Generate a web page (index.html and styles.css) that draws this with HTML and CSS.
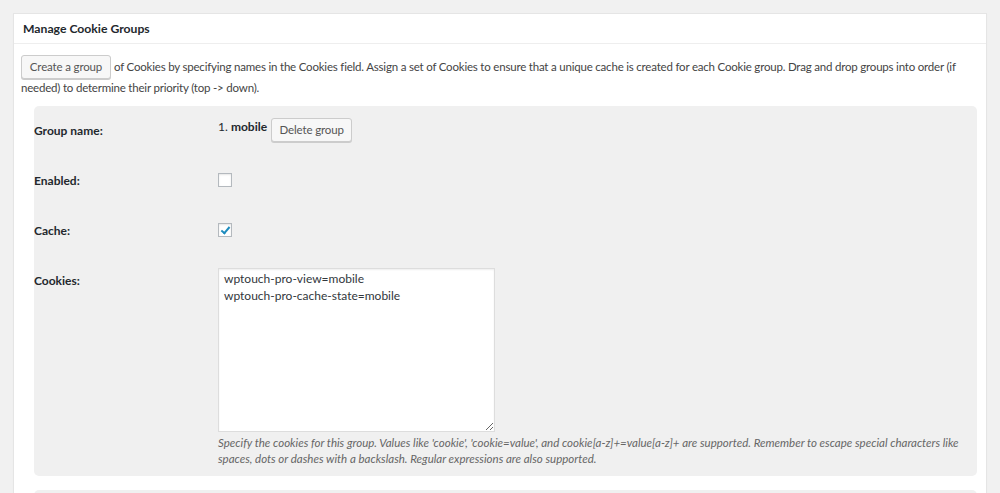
FILE: index.html
```html
<!DOCTYPE html>
<html lang="en">
<head>
<meta charset="utf-8">
<title>Manage Cookie Groups</title>
<link rel="stylesheet" href="styles.css">
</head>
<body>
<div class="postbox">
  <h2 class="hndle">Manage Cookie Groups</h2>
  <div class="inside">
    <div class="intro">
      <button class="button btn-create" type="button">Create a group</button>
      <p class="intro-text">of Cookies by specifying names in the Cookies field. Assign a set of Cookies to ensure that a unique cache is created for each Cookie group. Drag and drop groups into order (if needed) to determine their priority (top -&gt; down).</p>
    </div>
    <div class="groups">
      <div class="group">
        <div class="row row-name">
          <div class="label">Group name:</div>
          <div class="value"><span class="gname">1. <strong>mobile</strong></span> <button class="button btn-delete" type="button">Delete group</button></div>
        </div>
        <div class="row row-check">
          <div class="label">Enabled:</div>
          <div class="value"><input class="cb" type="checkbox"></div>
        </div>
        <div class="row row-check">
          <div class="label">Cache:</div>
          <div class="value"><input class="cb" type="checkbox" checked></div>
        </div>
        <div class="row row-cookies">
          <div class="label">Cookies:</div>
          <div class="value">
            <textarea class="cookies" rows="9" cols="40">wptouch-pro-view=mobile
wptouch-pro-cache-state=mobile</textarea>
            <p class="description">Specify the cookies for this group. Values like 'cookie', 'cookie=value', and cookie[a-z]+=value[a-z]+ are supported. Remember to escape special characters like spaces, dots or dashes with a backslash. Regular expressions are also supported.</p>
          </div>
        </div>
      </div>
      <div class="group group-next"></div>
    </div>
  </div>
</div>
</body>
</html>
```

FILE: styles.css
```css
html, body {
  margin: 0;
  padding: 0;
  background: #f1f1f1;
  overflow: hidden;
}
body {
  padding-top: 13px;
  font-family: Lato, "Open Sans", sans-serif;
  font-size: 12px;
  color: #444;
}
.postbox {
  margin-left: 13px;
  width: 972px;
  background: #fff;
  border: 1px solid #e5e5e5;
  box-shadow: 0 1px 1px rgba(0, 0, 0, 0.04);
  min-height: 600px;
}
.hndle {
  margin: 0;
  height: 29px;
  line-height: 30px;
  padding: 0 9px;
  font-size: 12.2px;
  font-weight: 700;
  color: #23282d;
  border-bottom: 1px solid #eee;
}
.inside {
  padding: 0 8px 0 7px;
}
.intro {
  padding: 12px 0 8px;
}
.intro-text {
  margin: 0;
  font-size: 11.5px;
  letter-spacing: -0.2px;
  line-height: 21px;
  color: #444;
}
.button {
  display: inline-block;
  font-family: inherit;
  font-size: 11.5px;
  letter-spacing: -0.15px;
  color: #555;
  background: #f7f7f7;
  border: 1px solid #ccc;
  border-radius: 3px;
  box-shadow: 0 1px 0 #ccc;
  padding: 0;
  height: 24px;
  line-height: 22px;
  cursor: pointer;
  vertical-align: middle;
}
.btn-create {
  float: left;
  margin: -1px 3px -6px 0;
  width: 90px;
}
.groups {
  padding: 0 1px 0 13px;
}
.group {
  background: #f0f0f0;
  border-radius: 5px;
  padding-bottom: 9px;
}
.group-next {
  margin-top: 14px;
  height: 40px;
}
.row {
  display: grid;
  grid-template-columns: 184px 1fr;
  height: 50px;
}
.row-cookies {
  height: auto;
}
.label {
  padding-top: 16px;
  line-height: 17px;
  font-weight: 700;
  color: #23282d;
}
.row-name .value {
  padding-top: 12px;
}
.gname {
  display: inline-block;
  vertical-align: top;
  line-height: 17px;
  color: #23282d;
}
.gname strong {
  font-weight: 700;
}
.btn-delete {
  vertical-align: top;
  width: 81px;
  margin-left: 1px;
}
.row-check .value {
  padding-top: 17px;
}
.cb {
  -webkit-appearance: none;
  appearance: none;
  display: block;
  margin: 0;
  width: 14px;
  height: 14px;
  background: #fff;
  border: 1px solid #b4b9be;
  box-shadow: inset 0 1px 2px rgba(0, 0, 0, 0.1);
  box-sizing: border-box;
  position: relative;
}
.cb:checked::before {
  content: "";
  position: absolute;
  left: 4px;
  top: 1px;
  width: 3px;
  height: 7px;
  border-right: 2px solid #1e8cbe;
  border-bottom: 2px solid #1e8cbe;
  transform: rotate(40deg);
}
.row-cookies .value {
  padding-top: 12px;
  padding-right: 8px;
}
.cookies {
  display: block;
  box-sizing: border-box;
  width: 277px;
  height: 164px;
  margin: 0;
  padding: 1px 5px;
  border: 1px solid #ddd;
  box-shadow: inset 0 1px 2px rgba(0, 0, 0, 0.07);
  background: #fff;
  font-family: inherit;
  font-size: 12px;
  line-height: 17px;
  color: #32373c;
}
.description {
  margin: 3px 0 0;
  font-style: italic;
  font-size: 11.5px;
  line-height: 16px;
  color: #666;
}
```
